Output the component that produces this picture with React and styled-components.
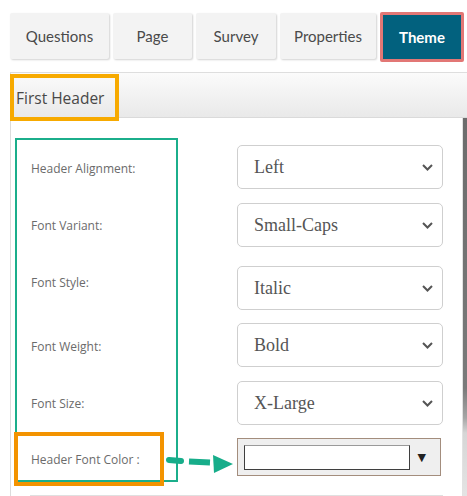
import React from 'react'
import styled, { createGlobalStyle } from 'styled-components'

const GlobalStyle = createGlobalStyle`
  body {
    margin: 0;
    background: #fff;
  }
`

const tabs = [
  { name: 'Questions', width: 99 },
  { name: 'Page', width: 79 },
  { name: 'Survey', width: 80 },
  { name: 'Properties', width: 96 },
  { name: 'Theme', width: 84, active: true },
]

const fields = [
  { label: 'Header Alignment:', value: 'Left', mt: 0 },
  { label: 'Font Variant:', value: 'Small-Caps', mt: 14 },
  { label: 'Font Style:', value: 'Italic', mt: 19 },
  { label: 'Font Weight:', value: 'Bold', mt: 13, gap: 7 },
  { label: 'Font Size:', value: 'X-Large', mt: 14 },
]

const Chevron = () => (
  <svg width="11" height="7" viewBox="0 0 11 7">
    <polyline points="1,1 5.5,5.5 10,1" fill="none" stroke="#555" strokeWidth="2" />
  </svg>
)

const DashedArrow = () => (
  <ArrowWrap width="68" height="20" viewBox="0 0 68 20">
    <line x1="3" y1="6" x2="15" y2="7" stroke="#17ad8a" strokeWidth="6" strokeLinecap="round" />
    <line x1="23" y1="7.5" x2="44" y2="8.5" stroke="#17ad8a" strokeWidth="6" />
    <polygon points="47,1 67,10 48,19" fill="#17ad8a" />
  </ArrowWrap>
)

const App = () => {
  return (
    <Page>
      <GlobalStyle />
      <TabBar>
        {tabs.map((t) => (
          <Tab key={t.name} $width={t.width} $active={t.active}>
            {t.name}
          </Tab>
        ))}
      </TabBar>
      <Panel>
        <PanelHeader>
          <HeaderTitle>First Header</HeaderTitle>
        </PanelHeader>
        <PanelBody>
          <Content>
            <Columns>
              <LabelBox>
                {fields.map((f) => (
                  <Label key={f.label} $gap={f.gap}>
                    {f.label}
                  </Label>
                ))}
                <ColorLabel>Header Font Color :</ColorLabel>
              </LabelBox>
              <Controls>
                {fields.map((f) => (
                  <Select key={f.label} $mt={f.mt}>
                    <span>{f.value}</span>
                    <Chevron />
                  </Select>
                ))}
                <ColorPicker>
                  <ColorInput />
                  <DropArrow>▼</DropArrow>
                </ColorPicker>
              </Controls>
            </Columns>
            <Divider />
            <DashedArrow />
          </Content>
          <Scrollbar />
        </PanelBody>
      </Panel>
    </Page>
  )
}

const Page = styled.div`
  width: 467px;
  height: 496px;
  overflow: hidden;
  font-family: Lato, "Open Sans", sans-serif;
`

const TabBar = styled.div`
  display: flex;
  align-items: flex-start;
  gap: 4px;
  padding: 12px 0 0 10px;
`

const Tab = styled.div`
  box-sizing: border-box;
  width: ${(p) => p.$width}px;
  height: ${(p) => (p.$active ? 50 : 46)}px;
  margin-top: ${(p) => (p.$active ? 0 : 1)}px;
  display: flex;
  align-items: center;
  justify-content: center;
  font-size: 15px;
  font-weight: ${(p) => (p.$active ? 700 : 400)};
  color: ${(p) => (p.$active ? '#fff' : '#4a4a4a')};
  background: ${(p) => (p.$active ? '#02617e' : '#f3f3f3')};
  border: ${(p) => (p.$active ? '3px solid #e27775' : 'none')};
  box-shadow: ${(p) => (p.$active ? 'none' : '1px 1px 2px rgba(0,0,0,0.18)')};
  border-radius: 2px;
`

const Panel = styled.div`
  margin: 10px 0 0 10px;
  border-left: 1px solid #dcdcdc;
  border-top: 1px solid #dedede;
`

const PanelHeader = styled.div`
  height: 44px;
  display: flex;
  align-items: flex-start;
  background: linear-gradient(#fbfbfb, #e9e9e9);
  border-bottom: 1px solid #dadada;
`

const HeaderTitle = styled.div`
  position: relative;
  z-index: 1;
  box-sizing: border-box;
  width: 109px;
  height: 47px;
  margin: 1px 0 0 -1px;
  padding-left: 2px;
  display: flex;
  align-items: center;
  border: 4px solid #f7aa00;
  font-family: "Open Sans", sans-serif;
  font-size: 15.5px;
  color: #484848;
`

const PanelBody = styled.div`
  display: flex;
`

const Content = styled.div`
  position: relative;
  flex: 1;
  padding-top: 20px;
  border-right: 1px solid #e2e2e2;
`

const Columns = styled.div`
  display: flex;
  align-items: flex-start;
`

const LabelBox = styled.div`
  box-sizing: border-box;
  width: 163px;
  margin-left: 4px;
  border: 2px solid #1bae8b;
  display: flex;
  flex-direction: column;
`

const Label = styled.div`
  height: 57px;
  margin-top: ${(p) => p.$gap || 0}px;
  padding-left: 14px;
  display: flex;
  align-items: center;
  font-family: "Open Sans", sans-serif;
  font-size: 12px;
  color: #6b6b6b;
`

const ColorLabel = styled(Label)`
  box-sizing: border-box;
  width: 150px;
  height: 54px;
  margin: 0 0 -6px -3px;
  padding-left: 13px;
  border: 4px solid #f39300;
`

const Controls = styled.div`
  width: 206px;
  margin: 7px 0 0 59px;
  display: flex;
  flex-direction: column;
`

const Select = styled.div`
  box-sizing: border-box;
  height: 44px;
  margin-top: ${(p) => p.$mt}px;
  padding: 0 9px 0 16px;
  display: flex;
  align-items: center;
  justify-content: space-between;
  border: 1px solid #cfcfcf;
  border-radius: 5px;
  background: #fff;
  font-family: "Liberation Serif", serif;
  font-size: 18px;
  color: #555;
`

const ColorPicker = styled.div`
  box-sizing: border-box;
  width: 204px;
  height: 38px;
  margin-top: 13px;
  padding: 0 14px 0 6px;
  display: flex;
  align-items: center;
  justify-content: space-between;
  background: #efefef;
  border: 1px solid #a38d7d;
`

const ColorInput = styled.div`
  box-sizing: border-box;
  width: 166px;
  height: 25px;
  background: #fff;
  border: 1px solid #3f3f3f;
  border-top-color: #9a9a9a;
`

const DropArrow = styled.span`
  font-family: "DejaVu Sans", sans-serif;
  font-size: 11px;
  color: #222;
`

const Divider = styled.div`
  width: 413px;
  margin: 13px 0 0 19px;
  border-top: 1px solid #e0e0e0;
`

const ArrowWrap = styled.svg`
  position: absolute;
  left: 155px;
  top: 336px;
`

const Scrollbar = styled.div`
  width: 4px;
  background: linear-gradient(#6c6c6c, #7a7a7a 270px, #a6a6a6 300px, #d6d6d6 315px, #e4e4e4);
`

export default App
